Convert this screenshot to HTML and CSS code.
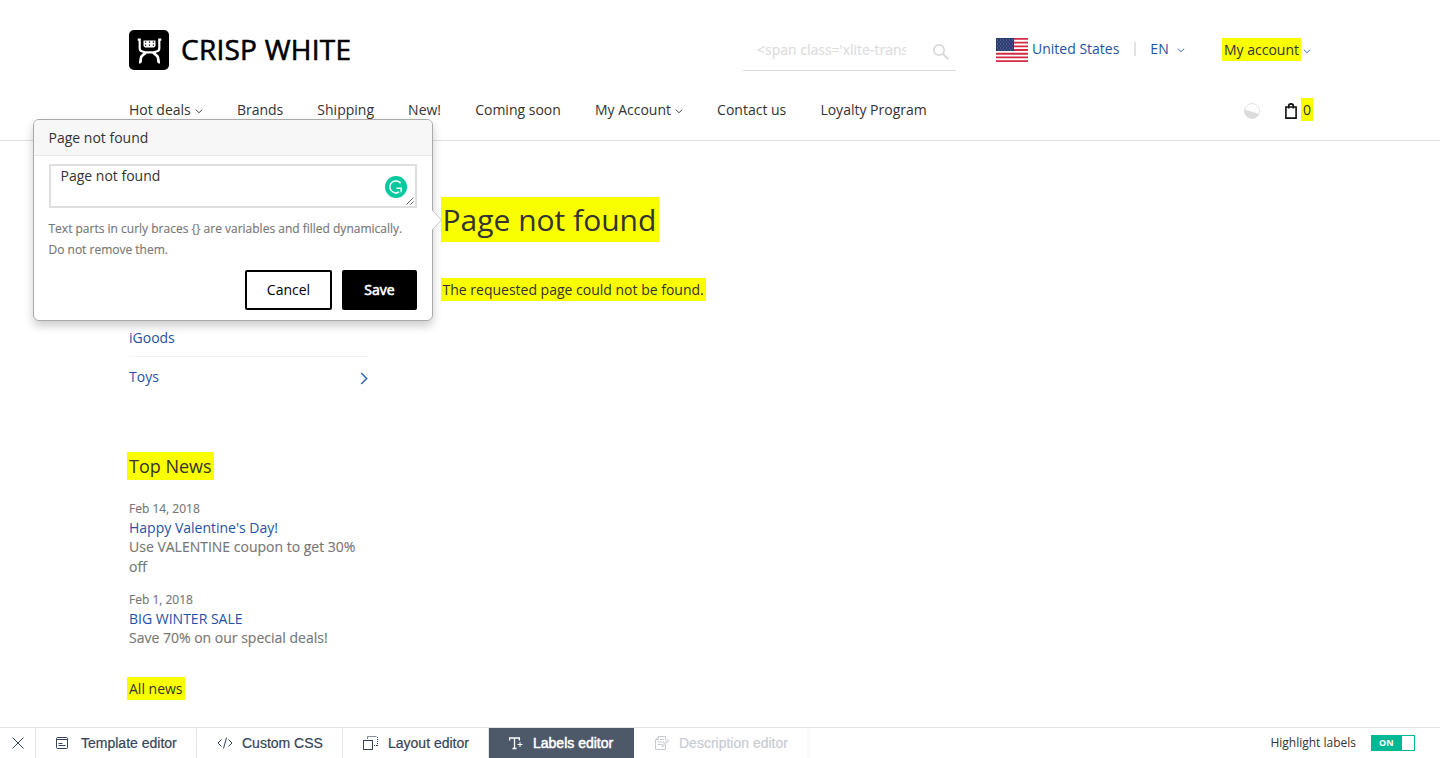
FILE: index.html
```html
<!DOCTYPE html>
<html lang="en">
<head>
<meta charset="utf-8">
<title>Page not found</title>
<link rel="stylesheet" href="styles.css">
</head>
<body>
<header class="header">
  <div class="top-row">
    <a class="logo">
      <svg width="40" height="40" viewBox="0 0 40 40"><rect width="40" height="40" rx="5"/><g fill="none" stroke="#fff"><path d="M8.700 9.700h2v8.600q0 2.700 2.800 3.200l3 .8h8l3-.8q2.800-.5 2.800-3.200V9.700h2" stroke-width="2.200"/><path d="M16.500 22.500c-1 2.500-4.800 2.500-4.800 6.500v1.500q-.2 1.700-1.700 1.700M24.500 22.500c1 2.500 4.800 2.500 4.800 6.500v1.500q.2 1.700 1.700 1.700" stroke-width="2.700"/></g><path d="M14.500 10.500h12v5.500l-1.500 1.500h-9L14.500 16z" fill="#fff"/><path d="M16 11.500h1.200v1.200H16zM19.900 11.500h1.200v1.200h-1.200zM23.800 11.500H25v1.200h-1.200zM16 14.500h1.200v1.200H16zM19.900 14.500h1.200v1.200h-1.200zM23.800 14.500H25v1.200h-1.200z"/></svg>
      <span class="brand">CRISP WHITE</span>
    </a>
    <div class="search">
      <span class="search-text">&lt;span class='xlite-trans</span>
      <svg width="18" height="18" viewBox="0 0 18 18" fill="none" stroke="#d9d9d9" stroke-width="1.700"><circle cx="7" cy="7" r="5.200"/><path d="M10.700 10.700L16.300 16.300" stroke-width="2"/></svg>
    </div>
    <div class="locale">
      <svg class="flag" width="32" height="24" viewBox="0 0 32 24"><path fill="#fff" d="M0 0h32v24H0z"/><path d="M0 .9h32M0 4.600h32M0 8.300h32M0 12h32M0 15.700h32M0 19.400h32M0 23.100h32" stroke="#d32b45" stroke-width="1.850"/><path fill="#293a6e" d="M0 0h18v13H0z"/><path d="M1 2h17M2.500 4h15M1 6h17M2.500 8h15M1 10h17M2.500 12h15" stroke="#8590b2" stroke-width=".9" stroke-dasharray="1 2"/></svg>
      <span class="country">United States</span>
      <span class="divider"></span>
      <span>EN</span>
      <svg class="lang-caret" width="8" height="5" viewBox="0 0 8 5"><path d="M.8.7L4 3.700 7.200.7"/></svg>
    </div>
    <div class="account"><span class="mark">My account</span><svg width="8" height="5" viewBox="0 0 8 5"><path d="M.8.7L4 3.700 7.200.7"/></svg></div>
  </div>
  <div class="nav-row">
    <nav class="nav">
      <a>Hot deals<svg width="8" height="5" viewBox="0 0 8 5"><path d="M.8.7L4 3.700 7.200.7"/></svg></a>
      <a>Brands</a><a>Shipping</a><a>New!</a><a>Coming soon</a>
      <a>My Account<svg width="8" height="5" viewBox="0 0 8 5"><path d="M.8.7L4 3.700 7.200.7"/></svg></a>
      <a>Contact us</a><a>Loyalty Program</a>
    </nav>
    <div class="cart">
      <svg class="compare" width="16" height="16" viewBox="0 0 16 16"><circle cx="8" cy="8" r="7.500" fill="#fff" stroke="#e4e4e4"/><path d="M.2 6.200L15.300 11A8 8 0 0 1 .2 6.200z" fill="#dcdcdc"/></svg>
      <svg class="bag" width="12" height="16" viewBox="0 0 12 16" fill="none" stroke="#111" stroke-width="1.600"><path d="M.9 4h10.200v11.100H.9zM3.600 5.500V3.200Q3.600.9 6 .9t2.400 2.300v2.300"/></svg>
      <span class="mark">0</span>
    </div>
  </div>
</header>
<main class="page">
  <aside class="sidebar">
    <ul class="categories">
      <li>iGoods</li>
      <li>Toys<svg width="8" height="13" viewBox="0 0 8 13" fill="none" stroke="#2e66b5" stroke-width="1.500"><path d="M1.200 1L6.700 6.500 1.200 12"/></svg></li>
    </ul>
    <h3 class="news-title"><span class="mark">Top News</span></h3>
    <article class="news"><time>Feb 14, 2018</time><a>Happy Valentine's Day!</a><p>Use VALENTINE coupon to get 30% off</p></article>
    <article class="news"><time>Feb 1, 2018</time><a>BIG WINTER SALE</a><p>Save 70% on our special deals!</p></article>
    <div class="all-news"><span class="mark">All news</span></div>
  </aside>
  <section class="content">
    <h1><span class="mark">Page not found</span></h1>
    <p><span class="mark">The requested page could not be found.</span></p>
  </section>
</main>
<div class="popover">
  <div class="popover-title">Page not found</div>
  <div class="popover-body">
    <div class="editor">Page not found
      <svg class="checker" width="22" height="22" viewBox="0 0 22 22"><circle cx="11" cy="11" r="11" fill="#07c9a0"/><path d="M15.600 7.200A6 6 0 1 0 14 16M11.500 12.300h4.700v4" fill="none" stroke="#fff" stroke-width="1.500"/></svg>
      <svg class="grip" width="8" height="8" viewBox="0 0 8 8"><path d="M.5 7.500l7-7M4.500 7.500l3-3" stroke="#555" stroke-width=".9"/></svg>
    </div>
    <p class="hint">Text parts in curly braces {} are variables and filled dynamically. Do not remove them.</p>
    <div class="actions"><button class="btn cancel">Cancel</button><button class="btn save">Save</button></div>
  </div>
  <svg class="arrow" width="10" height="22" viewBox="0 0 10 22"><path d="M0 1l9.500 10L0 21" fill="#fff" stroke="#c4c4c4"/></svg>
</div>
<footer class="toolbar">
  <div class="tab close"><svg width="12" height="12" viewBox="0 0 12 12"><path d="M.5.5l11 11M11.500.5l-11 11"/></svg></div>
  <div class="tab template"><svg width="12" height="12" viewBox="0 0 12 12"><rect x=".5" y=".5" width="11" height="11" rx="1"/><path d="M.5 2.500h11M2.500 6.500h4M2.500 8.500h7"/></svg><span>Template editor</span></div>
  <div class="tab css"><svg width="16" height="12" viewBox="0 0 16 12"><path d="M4.500 2.500L1 6l3.500 3.500M11.500 2.500L15 6l-3.500 3.500M9.500.5l-3 11"/></svg><span>Custom CSS</span></div>
  <div class="tab layout"><svg width="16" height="14" viewBox="0 0 16 14"><rect x=".5" y="4.500" width="9" height="9"/><path d="M4.500 3V.5h9" opacity=".6"/><path d="M14.500 1v9M11 9.500h3.500" stroke-dasharray="1 1"/></svg><span>Layout editor</span></div>
  <div class="tab labels"><svg width="14" height="13" viewBox="0 0 14 13"><path d="M.6 3.500V1h9.800v2.500M5.500 1v10.500M3.500 11.500h4" stroke-width="1.300"/><path d="M11 5v5M8.500 7.500h5"/></svg><span>Labels editor</span></div>
  <div class="tab description"><svg width="15" height="14" viewBox="0 0 15 14"><path d="M10.500 9v4.500H.5v-10l3-3h7V4M.5 3.500h3v-3M5 3.500h4M3 6h6M3 8.500h4M14 4.500L8.500 10l-1.500.7.600-1.700L13 3.500z"/></svg><span>Description editor</span></div>
  <div class="highlight"><span>Highlight labels</span><span class="switch"><b>ON</b><i></i></span></div>
</footer>
</body>
</html>
```
FILE: styles.css
```css
* { box-sizing: border-box; }
body { margin: 0; height: 758px; overflow: hidden; position: relative; display: flex; flex-direction: column; background: #fff; color: #333; font: 14px/20px "Open Sans", sans-serif; }
h1, h3, p, ul { margin: 0; padding: 0; font-weight: 400; }
svg { flex: none; }
.mark { background: #faff00; color: #333; padding: 2px; }
.header { height: 141px; flex: none; padding: 30px 127px 0 129px; border-bottom: 1px solid #dedede; }
.top-row { display: flex; height: 40px; }
.logo { display: flex; width: 614px; gap: 12px; }
.brand { font-size: 28px; line-height: 38px; letter-spacing: .25px; color: #000; -webkit-text-stroke: .6px #000; white-space: nowrap; }
.search { width: 213px; height: 41px; padding: 10px 6px 0 14px; display: flex; justify-content: space-between; border-bottom: 1px solid #d9d9d9; color: #ddd; }
.search-text { width: 149px; height: 20px; overflow: hidden; white-space: nowrap; -webkit-text-stroke: .2px; }
.search svg { margin-top: 3px; }
.locale { margin-left: 40px; width: 226px; height: 24px; margin-top: 8px; display: flex; color: #2453a5; line-height: 22px; }
.country { margin-left: 4px; white-space: nowrap; }
.divider { width: 2px; height: 14px; background: #e2e2e2; margin: 4px 14.500px 0; }
.locale .lang-caret { margin: 10px 0 0 8px; }
.lang-caret, .account svg { fill: none; stroke: #3d73bd; }
.account { display: flex; margin-top: 8px; height: 23px; }
.account .mark { width: 79px; white-space: nowrap; }
.account svg { margin: 11px 0 0 2px; }
.nav-row { display: flex; justify-content: space-between; margin-top: 28px; height: 24px; }
.nav { display: flex; gap: 34.100px; line-height: 24px; }
.nav a { display: flex; align-items: center; white-space: nowrap; }
.nav svg { margin: 2px 0 0 4px; fill: none; stroke: #444; }
.cart { display: flex; align-items: center; }
.cart .compare { margin-top: 2px; }
.cart .bag { margin: 2px 4px 0 25px; }
.cart .mark { width: 12px; height: 23px; margin-bottom: 1px; }
.page { display: flex; padding-left: 129px; flex: 1; min-height: 0; }
.sidebar { width: 240px; padding-top: 177px; }
.categories { list-style: none; color: #2453a5; }
.categories li { height: 39px; padding-top: 2px; display: flex; justify-content: space-between; align-items: center; border-bottom: 1px solid #f3f3f3; }
.categories li:last-child { border: 0; padding-top: 1px; }
.categories svg { margin: 2px 1px 0 0; }
.news-title { margin: 56px 0 0 -2px; height: 28px; font-size: 18px; line-height: 28px; }
.news-title .mark { display: inline-block; padding: 0 2px; }
.news { margin-top: 14px; line-height: 19.600px; color: #777; }
.news-title + .news { margin-top: 19px; }
.news p, .news time { -webkit-text-stroke: .15px; }
.news time { display: block; font-size: 12px; height: 19px; }
.news a { display: block; color: #2453a5; height: 19px; }
.all-news { margin: 29px 0 0 -2px; }
.all-news .mark { display: inline-block; height: 23px; }
.content { margin-left: 72px; padding-top: 56px; }
.content .mark { display: inline-block; }
h1 { height: 45px; font-size: 30px; line-height: 45px; }
h1 .mark { padding: 0 3px 0 1.500px; }
.content p { margin-top: 36px; }
.content p .mark { height: 23px; padding: 2px 2.500px 1px 1.500px; }
.popover { position: absolute; left: 33px; top: 119px; width: 400px; height: 202px; background: #fff; border: 1px solid #aaa; border-radius: 6px; box-shadow: 0 5px 10px rgba(0,0,0,.2); }
.popover-title { height: 36px; line-height: 35px; padding-left: 14.500px; background: #f7f7f7; border-bottom: 1px solid #e8e8e8; border-radius: 5px 5px 0 0; }
.popover-body { padding: 8px 15px 0; }
.editor { position: relative; height: 44px; border: 2px solid #dedede; padding-left: 9.500px; }
.checker { position: absolute; right: 8px; top: 10px; }
.grip { position: absolute; right: 1px; bottom: 1px; }
.hint { margin: 10px 0 0 -.5px; color: #777; font-size: 12px; line-height: 21px; -webkit-text-stroke: .15px; }
.actions { display: flex; justify-content: flex-end; gap: 10px; margin-top: 10px; }
.btn { height: 40px; border: 2px solid #000; border-radius: 2px; padding: 0 0 2px; font: 14px "Open Sans", sans-serif; }
.cancel { width: 87px; background: #fff; color: #000; }
.save { width: 75px; background: #000; color: #fff; -webkit-text-stroke: .6px; }
.arrow { position: absolute; left: 398px; top: 89px; }
.toolbar { height: 31px; flex: none; display: flex; border-top: 1px solid #e5e5e5; background: #fff; color: #354457; font: 14px/30px "Liberation Sans", Arial, sans-serif; }
.tab { display: flex; align-items: center; white-space: nowrap; border-right: 1px solid #e5e5e5; padding-left: 20px; -webkit-text-stroke: .2px; }
.tab svg { fill: none; stroke: currentColor; stroke-width: 1; }
.close { width: 36px; padding-left: 12px; }
.template { width: 161px; gap: 13px; }
.css { width: 146px; gap: 9px; }
.layout { width: 146px; gap: 9px; }
.labels { width: 145px; gap: 10px; background: #4d5968; color: #fff; border: 0; -webkit-text-stroke: .5px; }
.description { width: 175px; margin-left: 1px; gap: 9px; color: #c8ccd1; border-right: 3px solid #fafafa; }
.highlight { margin-left: auto; margin-right: 25px; display: flex; align-items: center; gap: 15px; color: #333; font-family: "Open Sans", sans-serif; font-size: 12px; }
.switch { display: flex; width: 44px; height: 16px; border: 1px solid #00b894; background: #00b894; justify-content: space-between; }
.switch b { color: #fff; font-size: 9px; line-height: 14px; padding-left: 7px; }
.switch i { width: 12px; background: #fff; }
```
